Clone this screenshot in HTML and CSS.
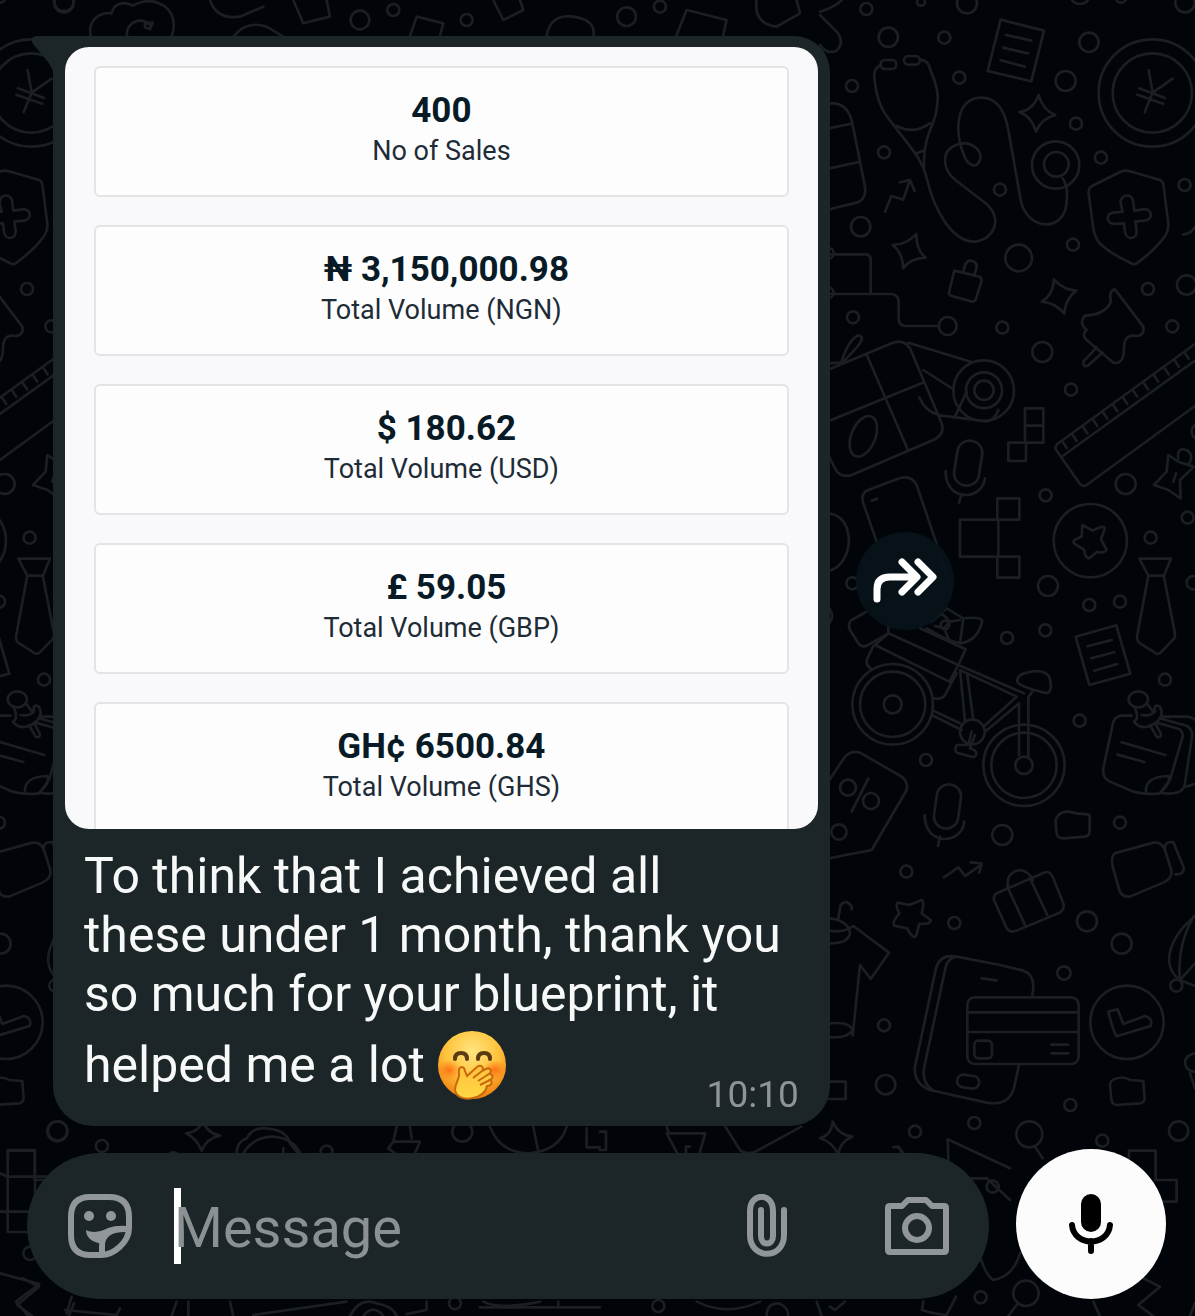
FILE: index.html
```html
<!DOCTYPE html>
<html lang="en">
<head>
    <meta charset="UTF-8">
    <meta name="viewport" content="width=device-width, initial-scale=1.0">
    <title>Chat</title>
    <link rel="stylesheet" href="styles.css">
</head>
<body>

<!-- doodle wallpaper, tile repeats every 1121 units -->
<svg class="wallpaper" viewBox="0 0 1195 1316" preserveAspectRatio="xMinYMin slice" aria-hidden="true">
    <g id="tile">
        <g transform="scale(.3333)">
            <circle cx="192" cy="3" r="30"/>
            <path d="M273 110C262 70 290 35 335 40C340 8 375 3 398 17C450-12 510 10 520 60Q524 85 515 110M380 108C380 60 430 50 450 75M435 70L458 68L450 88L435 82Z"/>
            <path d="M630 0Q650 60 720 50L790 20M700 110Q740 60 800 80L850 110M880 0L910 70L990 50L980 0"/>
            <circle cx="1080" cy="60" r="28"/><circle cx="1180" cy="30" r="18"/><circle cx="1400" cy="60" r="18"/>
            <path d="M1230 108L1250 50L1330 70L1320 108M1480 0L1510 60L1570 30L1560 0M1640 110Q1650 40 1720 50Q1790 60 1780 110"/>
            <circle cx="1880" cy="50" r="28"/><circle cx="1980" cy="20" r="18"/>
            <path d="M2030 105L2060 30L2180 60L2170 105M2270 0Q2260 70 2330 80L2400 40L2390 0"/>
        </g>
        <g transform="translate(820 0) scale(.3333)">
            <circle cx="139" cy="27" r="18"/><circle cx="205" cy="112" r="29"/><circle cx="373" cy="113" r="18"/>
            <circle cx="441" cy="10" r="30"/><circle cx="418" cy="233" r="18"/><circle cx="96" cy="258" r="18"/>
            <circle cx="192" cy="457" r="18"/><circle cx="122" cy="680" r="29"/><circle cx="99" cy="952" r="18"/>
            <circle cx="807" cy="127" r="29"/><circle cx="737" cy="243" r="30"/><circle cx="768" cy="371" r="18"/>
            <circle cx="843" cy="473" r="18"/><circle cx="540" cy="569" r="18"/><circle cx="596" cy="774" r="40"/>
            <circle cx="759" cy="734" r="18"/><circle cx="984" cy="867" r="18"/><circle cx="1100" cy="855" r="29"/>
            <circle cx="1094" cy="555" r="18"/><circle cx="1095" cy="8" r="29"/><circle cx="780" cy="-18" r="30"/>
            <circle cx="303" cy="5" r="12"/><circle cx="903" cy="-8" r="16"/>
            <!-- stethoscope -->
            <rect x="182" y="180" width="47" height="27" rx="13"/><rect x="252" y="168" width="48" height="26" rx="13"/>
            <path d="M182 196Q160 205 163 232Q170 310 203 352C260 430 305 470 320 535C345 640 400 725 463 725C520 720 550 660 500 612L410 543C365 508 360 450 415 433C455 420 490 455 480 480C470 510 440 495 430 460C410 410 400 310 470 294C530 285 555 330 566 395L602 600C620 695 740 700 740 600Q745 560 728 535M300 180Q325 178 333 215Q358 270 352 310C350 380 310 390 312 500M230 378Q280 405 330 370M290 460L315 450"/>
            <circle cx="707" cy="495" r="71"/><circle cx="709" cy="493" r="37"/>
            <!-- sheet -->
            <path d="M542 59L672 92L634 244L503 213ZM558 105L634 122M549 143L624 160M542 181L614 200"/>
            <!-- sparkles -->
            <path d="M656 285Q668 330 706 345Q665 355 648 395Q636 350 598 336Q640 330 656 285Z"/>
            <path d="M289 702Q288 750 317 773Q275 773 249 805Q249 760 218 735Q260 735 289 702Z"/>
            <path d="M702 838Q730 870 769 872Q735 898 733 941Q706 908 665 905Q700 885 702 838Z"/>
            <!-- coin -->
            <circle cx="997" cy="279" r="161"/><circle cx="997" cy="279" r="119"/>
            <path d="M986 210L998 278L1058 236M998 278L974 337M957 265L1035 294M952 284L1030 311"/>
            <!-- shield -->
            <path d="M905 514Q915 510 930 514L1020 540Q1030 544 1031 560L1045 670Q1047 695 1030 715Q1005 750 950 790Q942 795 934 790Q860 755 835 725Q820 700 818 670L806 580Q804 562 822 555Z"/>
            <path d="M902 610C900 580 940 578 940 608L943 632L970 628C998 625 1000 658 975 662L946 665L950 692C952 720 918 722 915 695L912 670L885 672C855 672 858 640 880 638L908 635Z"/>
            <path d="M195 635L214 588L250 599L268 545M240 547L270 540L284 573M430 815L435 795Q443 778 458 783Q474 790 469 805L463 828M403 812L475 829Q487 833 484 845L468 897Q465 907 453 904L395 888Q384 885 388 873L401 820Q402 812 403 812Z"/>
            <path d="M10 310H45Q85 315 97 370L135 560Q140 600 110 608L20 630M25 385L90 372M25 506L117 486M0 35Q50 20 70-5M0 45L50 95Q75 125 50 152Q20 165 0 135"/>
            <path d="M30 763H135Q152 763 152 780V880M25 882H215Q236 885 236 905V955Q236 978 258 978H358M1125 680Q1115 700 1090 704"/>
            <circle cx="25" cy="760" r="16"/><circle cx="25" cy="878" r="16"/>
        </g>
        <g transform="translate(820 320) scale(.3333)">
            <circle cx="383" cy="18" r="27"/><circle cx="547" cy="23" r="18"/><circle cx="667" cy="96" r="30"/>
            <circle cx="753" cy="209" r="18"/><circle cx="1057" cy="19" r="18"/><circle cx="677" cy="526" r="18"/>
            <circle cx="917" cy="492" r="30"/><circle cx="1103" cy="593" r="18"/><circle cx="992" cy="653" r="18"/>
            <circle cx="684" cy="798" r="30"/><circle cx="808" cy="855" r="18"/><circle cx="900" cy="845" r="18"/>
            <circle cx="676" cy="931" r="18"/><circle cx="561" cy="954" r="18"/><circle cx="97" cy="790" r="18"/>
            <circle cx="1120" cy="788" r="20"/><circle cx="1140" cy="335" r="25"/>
            <!-- rocket and gift -->
            <path d="M28 148L215 70Q250 55 270 85L365 310Q375 340 345 358L95 465Q60 475 45 445L20 395M140 104L263 388M28 302L312 187M65 125Q85 60 115 46Q140 50 105 88L68 128M20 130L60 128M265 68L455 126M310 150L398 207M298 232Q315 275 360 286L500 304Q525 300 535 270M440 215L405 290"/>
            <ellipse cx="130" cy="349" rx="36" ry="64" transform="rotate(22 130 349)"/>
            <circle cx="491" cy="212" r="91"/><circle cx="492" cy="211" r="54"/><circle cx="492" cy="211" r="29"/>
            <!-- pin -->
            <path d="M795-13Q855-15 873-55Q865-88 885-92L970 20Q975 45 950 48Q910 40 912 90Q910 135 880 128L800 60Q783 45 800 30M830 82L790 125Q790 145 805 136L848 98M795-13Q775 10 800 30"/>
            <!-- ruler -->
            <path d="M1125 72L712 372Q702 382 710 392L780 492Q790 502 800 495L1125 258M728 408L1125 122M728 365L740 384M758 345L770 363M790 322L802 340M820 300L832 318M850 278L862 296M880 256L892 274M910 234L922 252M940 212L952 230M972 190L984 208M1003 167L1015 185M1034 145L1046 163M1065 122L1077 140M1094 98L1106 116"/>
            <rect x="407" y="362" width="75" height="135" rx="36" transform="rotate(9 445 430)"/>
            <path d="M377 453C375 545 485 545 495 475M425 522L417 548M615 265H670V368H615ZM615 317H670M565 368H618V423H565ZM532 535H598V599H532ZM420 599H535V710H420ZM532 710H598V773H532Z"/>
            <!-- phone -->
            <path d="M175 680L130 550Q120 520 145 510L240 474Q275 465 290 495L390 790M155 542L171 536"/>
            <!-- star badge -->
            <circle cx="811" cy="662" r="110"/>
            <path d="M787 615L818 632Q860 610 853 630L843 658L860 690Q855 700 830 696L808 715Q795 715 793 690L762 670Q755 660 785 650Z"/>
            <!-- tie -->
            <path d="M958 716H1053L1032 767H985ZM985 767L951 950Q950 960 957 968L1000 995Q1013 1008 1025 995L1063 955Q1067 948 1064 935L1032 770"/>
            <path d="M1045 405L1075 425L1122 440L1080 480L1082 535L1045 510L1002 495L1040 455ZM1075 415Q1070 380 1100 390Q1125 405 1105 435M1060 485L1068 460"/>
            <path d="M28 580Q85 590 87 665Q80 735 28 753M28 865Q45 890 28 910"/>
            <!-- flowers in the basket -->
            <path d="M140 875L95 900Q82 910 90 930L115 970Q125 985 145 975L205 940L205 920M380 865L430 895Q480 890 487 902Q475 960 425 970Q385 965 320 925M430 895L420 970M335 905L365 880L390 905L372 925L345 918M390 905L420 900M372 925L385 955M350 880L375 870"/>
            <circle cx="375" cy="915" r="13"/>
        </g>
        <g transform="translate(820 620) scale(.3333)">
            <circle cx="318" cy="420" r="18"/><circle cx="779" cy="302" r="18"/><circle cx="1035" cy="179" r="18"/>
            <circle cx="547" cy="645" r="30"/><circle cx="259" cy="755" r="18"/><circle cx="900" cy="608" r="18"/>
            <!-- bicycle -->
            <circle cx="218" cy="253" r="121"/><circle cx="218" cy="253" r="98"/><circle cx="218" cy="253" r="27"/>
            <circle cx="612" cy="436" r="122"/><circle cx="612" cy="436" r="98"/><circle cx="612" cy="436" r="26"/>
            <circle cx="457" cy="336" r="37"/>
            <path d="M205 40L415 135L388 185L165 75ZM160 78L142 115Q135 135 152 145M300 25L437 88L415 135L612 220M420 150L590 230L490 320M442 165L460 300M420 150L435 305M335 285L425 330M340 272L420 310M410 160L375 225Q365 240 340 235M597 405V250L495 335M625 410V232L640 210M592 185Q590 165 620 158Q670 145 688 170Q700 215 680 220Q660 215 635 208Q595 195 592 185M455 335L445 375L410 375Q400 395 415 400L460 412Q475 405 465 392L450 385L465 345"/>
            <!-- sheet -->
            <path d="M767 50L889 16L931 161L808 195ZM803 79L876 60M814 115L883 97M822 152L892 132"/>
            <!-- sticky note -->
            <path d="M935 287H905Q888 288 880 305L850 445Q847 475 870 485L940 515Q980 525 1020 520L1050 480L1088 350Q1090 330 1070 325L1010 308M978 515Q975 470 1045 468Q1055 490 1020 518Q1090 530 1095 490L1117 345Q1115 315 1080 312L1020 295M1030 290H1100Q1120 290 1130 305M1098 500L1130 490M905 367L1036 405M893 404L973 426"/>
            <ellipse cx="955" cy="238" rx="29" ry="24"/>
            <path d="M943 260Q960 295 942 305Q965 335 1005 310Q1035 290 1020 260Q1000 250 1005 275Q990 290 965 285M980 250L1000 275M990 315L1010 350Q1025 355 1022 340L1005 308"/>
            <!-- price tag -->
            <path d="M28 480L75 410Q95 390 120 398L245 470Q265 485 260 510L155 690L28 715M145 475L95 575"/>
            <circle cx="84" cy="503" r="24"/><circle cx="153" cy="543" r="24"/><circle cx="57" cy="636" r="23"/>
            <rect x="346" y="493" width="73" height="133" rx="36" transform="rotate(8 382 560)"/>
            <path d="M314 586C315 680 425 675 433 605M360 650L354 678M372 772L415 742L436 768L485 733M452 727L485 730L478 758"/>
            <path d="M722 580Q740 570 768 580L805 583Q812 588 809 600V635Q808 648 795 650L730 655Q712 655 710 640L707 610Q705 590 722 580Z"/>
            <!-- camcorder -->
            <path d="M885 700L1000 668Q1025 665 1035 690L1054 750Q1058 775 1030 788L930 830Q905 832 898 810L878 740Q872 710 885 700ZM1035 690Q1030 665 1060 666L1092 745Q1090 765 1065 763"/>
            <!-- suitcase -->
            <path d="M565 800Q555 760 600 750Q630 755 638 780M530 820L675 757Q690 752 700 775L730 850Q735 870 715 880L590 932Q570 940 560 925L522 840Q520 825 530 820ZM562 800L615 915M630 775L682 885"/>
        </g>
        <g transform="translate(820 880) scale(.3333)">
            <circle cx="403" cy="129" r="18"/><circle cx="801" cy="124" r="30"/><circle cx="905" cy="191" r="30"/>
            <circle cx="732" cy="279" r="20"/><circle cx="192" cy="436" r="18"/><circle cx="197" cy="614" r="29"/>
            <circle cx="285" cy="755" r="18"/><circle cx="463" cy="729" r="18"/><circle cx="751" cy="675" r="18"/>
            <circle cx="847" cy="782" r="18"/><circle cx="1076" cy="753" r="29"/><circle cx="628" cy="763" r="39"/>
            <!-- t-shirt -->
            <path d="M55 115L62 75Q80 55 95 80V88M28 115Q80 120 90 155Q90 190 28 190M28 152Q70 160 100 138L207 218L152 297L120 255L98 467M28 430Q90 425 97 450Q85 475 28 472"/>
            <path d="M233 68L268 75L305 60Q315 65 305 100L332 120Q335 132 298 132L288 168Q278 178 262 145L222 137Q215 128 238 100Q225 75 233 68Z"/>
            <!-- phone with card -->
            <path d="M637 345Q650 285 610 272L540 255L410 230Q360 220 348 265L285 560Q280 610 330 630L500 668Q575 680 585 610L597 555M410 230Q380 235 375 270L312 565Q305 610 340 632M485 295L530 301"/>
            <rect x="442" y="352" width="334" height="200" rx="22"/>
            <path d="M442 397H776M442 456H776M694 494H745M694 520H745"/>
            <rect x="463" y="482" width="53" height="53" rx="12"/><rect x="411" y="586" width="67" height="38" rx="19" transform="rotate(8 445 605)"/>
            <circle cx="921" cy="427" r="110"/>
            <path d="M865 395L893 388L910 432L975 408Q1000 415 992 438L890 469Q880 455 865 395Z"/>
            <path d="M885 597Q910 587 930 600L970 603L974 655Q973 668 960 670L890 675Q875 673 874 655L870 615Q872 600 885 597Z"/>
            <path d="M1125 108Q1050 170 1047 240Q1050 280 1080 300L1125 250M1120 110Q1070 200 1080 300L1125 318M1125 520Q1095 525 1095 550Q1100 575 1125 575M1110 580L1125 625"/>
            <circle cx="1069" cy="317" r="18"/>
            <path d="M25 605H77V657H25M38 725Q55 765 97 770Q60 785 55 822Q35 785 0 775Q35 765 38 725ZM220 802Q240 795 245 820M235 800L250 820M385 840L383 778L570 865M645 800L668 835M927 840V812H1007V900H1070V965H1010M455 895H500L570 960"/>
        </g>
        <!-- strips around the composer -->
        <g transform="translate(600 1110) scale(.3333)">
            <path d="M0 65H18V120H0M200 50L206 70H316L298 130M200 70L232 130M376 50L420 120Q436 135 466 125L604 50M258 130V110H270M1140 440Q1160 500 1180 510Q1240 500 1260 430"/>
            <circle cx="1178" cy="230" r="18"/><circle cx="1142" cy="562" r="18"/><circle cx="1278" cy="550" r="38"/>
            <path d="M1250 585L1225 618M970 575L966 600Q1000 612 1040 615L1068 560M290 575Q380 620 480 575M500 618Q500 580 535 580Q565 590 565 618M650 575L665 618M690 590L705 600L735 575M1480 575L1500 618M1630 505L1680 530L1615 585L1660 618M1770 618L1785 580"/>
            <circle cx="175" cy="588" r="18"/>
        </g>
        <g transform="translate(0 1110) scale(.3333)">
            <circle cx="172" cy="64" r="30"/><circle cx="306" cy="108" r="18"/><circle cx="520" cy="145" r="18"/><circle cx="980" cy="125" r="18"/><circle cx="1387" cy="65" r="30"/>
            <path d="M608 30Q620 70 660 77Q620 85 605 122Q590 85 558 70Q600 65 608 30ZM710 130Q710 95 740 85Q760 50 800 55Q860 60 870 100L895 130M730 130Q760 80 820 80Q880 85 900 130M850 115V130M1190 50L1180 95H1260L1245 130M1230 50L1235 85M1180 95L1165 115L1185 130M1470 50Q1500 130 1590 130Q1680 120 1700 50M1600 50L1615 125M1760 55V112H1800M23 120H105V366H23ZM0 190L23 200H150M0 305H105"/>
            <circle cx="90" cy="430" r="20"/>
            <path d="M0 490L118 522L48 575L85 618M215 560L200 610M195 600L350 615L360 595M530 575L515 618M565 575V618M690 575L700 618M760 615L1040 575M1050 618Q1080 560 1130 580Q1180 590 1190 618M1090 618Q1120 580 1150 618M1280 575V600L1220 612M1440 592H1800M1450 575Q1500 600 1620 575M1675 575V592"/>
            <circle cx="1365" cy="580" r="18"/>
        </g>
    </g>
    <use href="#tile" x="-1121"/>
</svg>

<main class="chat">
    <div class="message-row">
        <article class="bubble">
            <svg class="tail" viewBox="0 0 24 42" aria-hidden="true"><path d="M8 0H24V42Q24 32 14 21L3 8Q-1 0 8 0Z"/></svg>
            <div class="preview">
                <div class="stat">
                    <strong>400</strong>
                    <span>No of Sales</span>
                </div>
                <div class="stat">
                    <strong class="symbol">₦ 3,150,000.98</strong>
                    <span>Total Volume (NGN)</span>
                </div>
                <div class="stat">
                    <strong class="symbol">$ 180.62</strong>
                    <span>Total Volume (USD)</span>
                </div>
                <div class="stat">
                    <strong class="symbol">£ 59.05</strong>
                    <span>Total Volume (GBP)</span>
                </div>
                <div class="stat">
                    <strong>GH¢ 6500.84</strong>
                    <span>Total Volume (GHS)</span>
                </div>
            </div>
            <div class="caption">
                <p>To think that I achieved all<br>these under 1 month, thank you<br>so much for your blueprint, it<br>helped me a lot
                    <svg class="emoji" viewBox="0 0 70 70" role="img" aria-label="face with hand over mouth">
                        <defs>
                            <radialGradient id="face" cx=".5" cy=".3" r=".72">
                                <stop offset="0" stop-color="#ffe681"/>
                                <stop offset=".55" stop-color="#ffc23a"/>
                                <stop offset="1" stop-color="#ee7c0e"/>
                            </radialGradient>
                            <radialGradient id="blush">
                                <stop offset="0" stop-color="#ff7212"/>
                                <stop offset="1" stop-color="#ff7a1f" stop-opacity="0"/>
                            </radialGradient>
                            <linearGradient id="hand" x1="0" y1="0" x2="0" y2="1">
                                <stop offset="0" stop-color="#ffc23c"/>
                                <stop offset="1" stop-color="#ffd843"/>
                            </linearGradient>
                        </defs>
                        <circle cx="35" cy="35" r="34" fill="url(#face)"/>
                        <ellipse cx="12" cy="40" rx="12" ry="10" fill="url(#blush)"/>
                        <ellipse cx="58" cy="40" rx="12" ry="10" fill="url(#blush)"/>
                        <path d="M18 29Q18 23 24 23T30 29M41 29Q41 23 47 23T53 29" fill="none" stroke="#5c3a12" stroke-width="4" stroke-linecap="round"/>
                        <path d="M22 43C21 36 27 35 28 41L30 46L40 37C44 34 48 38 45 41L49 39C53 37 56 41 52 44C56 44 57 48 53 50C56 51 55 56 50 56C49 62 43 67 36 68C27 70 19 67 18 60C18 53 23 49 22 43Z" fill="url(#hand)" stroke="#c9690f" stroke-width="2"/>
                        <path d="M45 41L36 48M52 44L41 51M53 50L43 55" fill="none" stroke="#c9690f" stroke-width="2"/>
                    </svg>
                </p>
                <time>10:10</time>
            </div>
        </article>
        <button class="forward" type="button" aria-label="Forward">
            <svg viewBox="0 0 64 46"><path d="M4 41V31Q4 19 17 19H43M29 4L44 19L29 34M45 4L60 19L45 34"/></svg>
        </button>
    </div>

    <form class="composer">
        <div class="field">
            <button class="icon" type="button" aria-label="Stickers">
                <svg viewBox="0 0 64 64">
                    <path class="line" d="M22 3H41Q61 3 61 23V34C61 48 46 61 33 61H22Q3 61 3 41V23Q3 3 22 3Z"/>
                    <path class="line" d="M34 60V52Q34 34 60 35"/>
                    <path d="M18 36C26 40 34 37 40 34Q48 31 60 32L50 38Q38 40 36 50C25 49 18 44 18 36Z"/>
                    <circle cx="21" cy="22" r="5"/><circle cx="43" cy="22" r="5"/>
                </svg>
            </button>
            <span class="caret"></span>
            <input type="text" placeholder="Message" aria-label="Message">
            <button class="icon attach" type="button" aria-label="Attach">
                <svg viewBox="0 0 64 64"><path class="line" d="M49 16V41C49 66 15 66 15 41V17C15 -2 38 -2 38 17V42C38 52 26 52 26 42V16"/></svg>
            </button>
            <button class="icon" type="button" aria-label="Camera">
                <svg viewBox="0 0 64 64">
                    <path class="line" d="M5 12H17L23 6H41L47 12H59Q61 12 61 14V56Q61 58 59 58H5Q3 58 3 56V14Q3 12 5 12Z"/>
                    <circle class="line" cx="32" cy="34" r="12"/>
                </svg>
            </button>
        </div>
        <button class="mic" type="button" aria-label="Record voice message">
            <svg viewBox="0 0 44 60"><rect x="12" y="0" width="20" height="38" rx="10"/><path d="M3 31C5 53 39 53 41 31M22 47V57"/></svg>
        </button>
    </form>
</main>

</body>
</html>
```

FILE: styles.css
```css
* {
    box-sizing: border-box;
}

body {
    margin: 0;
    min-height: 100vh;
    background: #010509;
    font-family: Roboto, "Liberation Sans", sans-serif;
    overflow-x: hidden;
}

button {
    border: none;
    padding: 0;
    background: none;
    cursor: pointer;
}

svg {
    display: block;
}

.wallpaper {
    position: fixed;
    inset: 0;
    width: 100%;
    height: 100%;
    z-index: -1;
    fill: none;
    stroke: #1b1e22;
    stroke-width: 8;
    stroke-linecap: round;
    stroke-linejoin: round;
}

.chat {
    padding: 36px 29px 16px 27px;
}

.message-row {
    display: flex;
    align-items: center;
    gap: 26px;
    margin-left: 26px;
}

.bubble {
    position: relative;
    width: 65vw;
    padding: 11px 12px 26px;
    border-radius: 0 36px 40px 40px;
    background: #1c2628;
}

.tail {
    position: absolute;
    top: 0;
    left: -23px;
    width: 24px;
    height: 42px;
    fill: #1c2628;
}

.preview {
    aspect-ratio: 752 / 781;
    padding: 19px 29px 0;
    border-radius: 24px;
    background: #f9f9fc;
    overflow: hidden;
}

.stat {
    height: 131px;
    margin-bottom: 28px;
    padding-top: 23px;
    border: 2px solid #e3e4e6;
    border-radius: 6px;
    background: #fdfdfe;
    text-align: center;
    line-height: 40px;
}

.stat strong {
    display: block;
    font-size: 35px;
    font-weight: 700;
    color: #071a26;
}

.stat .symbol {
    padding-left: 10px;
}

.stat span {
    font-size: 27px;
    color: #1d2c36;
}

.caption {
    display: grid;
    padding: 18px 19px 0;
}

.caption p,
.caption time {
    grid-area: 1 / 1;
}

.caption p {
    margin: 0;
    font-size: 50px;
    line-height: 59px;
    color: #f7f8f8;
}

.caption time {
    place-self: end;
    margin-bottom: -16px;
    font-size: 37px;
    line-height: 42px;
    color: #8f9496;
}

.emoji {
    display: inline-block;
    width: 70px;
    height: 70px;
    margin-top: 6px;
    vertical-align: -18px;
}

.forward {
    display: grid;
    place-items: center;
    flex: none;
    width: 98px;
    height: 98px;
    border-radius: 50%;
    background: rgba(6, 19, 25, 0.92);
}

.forward svg {
    width: 64px;
    height: 46px;
    fill: none;
    stroke: #fff;
    stroke-width: 7;
    stroke-linecap: round;
    stroke-linejoin: round;
}

.composer {
    display: flex;
    align-items: flex-end;
    gap: 27px;
    margin-top: 23px;
}

.field {
    display: flex;
    align-items: center;
    flex: 1;
    min-width: 0;
    height: 146px;
    padding: 0 40px 0 41px;
    border-radius: 73px;
    background: #1c2628;
}

.caret {
    flex: none;
    width: 7px;
    height: 76px;
    margin-left: 42px;
    background: #fff;
}

.field input {
    flex: 1;
    min-width: 0;
    height: 76px;
    margin-left: -7px;
    padding: 4px 0 0;
    border: none;
    outline: none;
    background: none;
    font-family: inherit;
    font-size: 56px;
    color: #f7f8f8;
}

.field input::placeholder {
    color: #8b9093;
    opacity: 1;
}

.icon {
    flex: none;
    width: 64px;
    height: 64px;
}

.icon svg {
    width: 64px;
    height: 64px;
    fill: #919699;
}

.icon .line {
    fill: none;
    stroke: #919699;
    stroke-width: 6;
    stroke-linecap: round;
    stroke-linejoin: round;
}

.attach {
    margin-right: 86px;
}

.mic {
    display: grid;
    place-items: center;
    flex: none;
    width: 150px;
    height: 150px;
    border-radius: 50%;
    background: #fcfcfc;
}

.mic svg {
    width: 44px;
    height: 60px;
}

.mic path {
    fill: none;
    stroke: #000;
    stroke-width: 6;
    stroke-linecap: round;
}
```
